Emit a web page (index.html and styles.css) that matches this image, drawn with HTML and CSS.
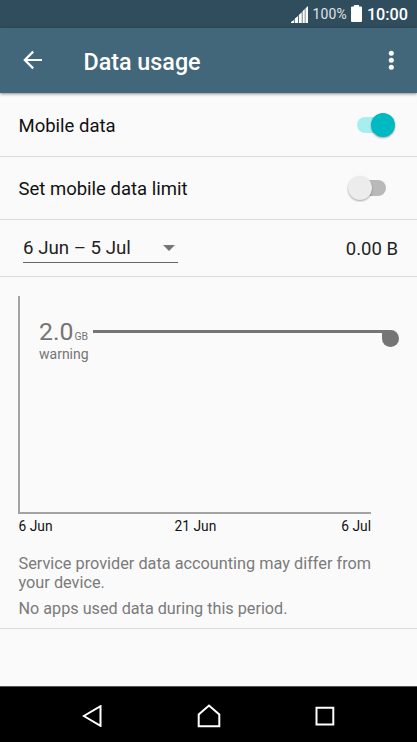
FILE: index.html
```html
<!DOCTYPE html>
<html lang="en">
<head>
<meta charset="utf-8">
<title>Data usage</title>
<link rel="stylesheet" href="styles.css">
</head>
<body>
<div class="status">
  <svg class="signal" width="17" height="17" viewBox="0 0 17 17"><path d="M0 17v-1l3-2v3zM3.700 17v-4.200L7 10v7zM7.800 17V9l3-2.700V17zM11.500 17V5.300l2.300-2.200V17zM14.400 17V2.500L17 0v17z" fill="#fff"/></svg>
  <span class="percent">100%</span>
  <svg class="battery" width="11" height="17" viewBox="0 0 11 17"><path d="M3 0h5v1.500h2q1 0 1 1V16q0 1-1 1H1q-1 0-1-1V2.500q0-1 1-1h2z" fill="#fff"/></svg>
  <span class="clock">10:00</span>
</div>
<header class="appbar">
  <svg class="back" width="20" height="20" viewBox="0 0 20 20"><path d="M19 10H2M10.200 1.600L1.800 10l8.400 8.400" fill="none" stroke="#fff" stroke-width="2.200"/></svg>
  <h1 class="title">Data usage</h1>
  <svg class="more" width="6" height="20" viewBox="0 0 6 20" fill="#fff"><circle cx="3.300" cy="3.200" r="2.500"/><circle cx="3.300" cy="10.200" r="2.500"/><circle cx="3.300" cy="17.200" r="2.500"/></svg>
</header>
<main class="content">
  <div class="row">
    <span>Mobile data</span>
    <span class="switch on"><span class="thumb"></span></span>
  </div>
  <div class="row">
    <span>Set mobile data limit</span>
    <span class="switch"><span class="thumb"></span></span>
  </div>
  <div class="row cycle">
    <div class="spinner"><span>6 Jun – 5 Jul</span><svg width="12" height="6" viewBox="0 0 12 6"><path d="M0 0h12L6 6z" fill="#757575"/></svg></div>
    <span class="total">0.00 B</span>
  </div>
  <section class="usage">
    <div class="chart">
      <div class="warning">
        <div class="label"><div class="amount">2.0<span class="unit">GB</span></div><div class="caption">warning</div></div>
        <span class="line"></span>
        <span class="handle"></span>
      </div>
    </div>
    <div class="axis"><span>6 Jun</span><span class="mid">21 Jun</span><span>6 Jul</span></div>
    <p class="note">Service provider data accounting may differ from your device.</p>
    <p class="note">No apps used data during this period.</p>
  </section>
</main>
<nav class="nav">
  <svg width="20" height="22" viewBox="0 0 20 22"><path d="M18.500 1.200v19.600L1.800 11z"/></svg>
  <svg width="24" height="24" viewBox="0 0 24 24"><path d="M1.700 22.300V10.500L12 1.500l10.300 9v11.800z"/></svg>
  <svg width="20" height="20" viewBox="0 0 20 20"><path d="M1.500 1.800h16.800v16.700H1.500z"/></svg>
</nav>
</body>
</html>
```
FILE: styles.css
```css
* { box-sizing: border-box; }
body {
  margin: 0;
  height: 742px;
  display: flex;
  flex-direction: column;
  overflow: hidden;
  background: #fafafa;
  color: #111;
  font-family: Roboto, "Liberation Sans", sans-serif;
  font-size: 18.500px;
}
svg { display: block; flex: none; }
.status {
  height: 28px;
  flex: none;
  display: flex;
  align-items: center;
  justify-content: flex-end;
  padding-right: 9px;
  background: #2f4d5d;
  color: #fff;
  white-space: nowrap;
}
.signal { margin: 1px 5px 0 0; }
.percent { font-size: 13.900px; letter-spacing: 0.200px; color: #e0e5e8; margin-right: 4px; }
.battery { margin: -1px 5px 0 0; }
.clock { font-size: 16.200px; font-weight: 500; }
.appbar {
  position: relative;
  height: 65px;
  flex: none;
  display: flex;
  align-items: center;
  padding: 0 23px 1px;
  background: #42677a;
  color: #fff;
  box-shadow: 0 1px 3px rgba(0, 0, 0, 0.450);
}
.title { margin: 3px 0 0 40.500px; font-size: 23.300px; font-weight: 500; flex: 1; }
.content { flex: 1; }
.row {
  height: 63px;
  display: flex;
  align-items: center;
  justify-content: space-between;
  padding: 2px 19px 0 18.500px;
  border-bottom: 1px solid #dadada;
}
.row:first-child { height: 64px; }
.switch {
  position: relative;
  width: 29px;
  height: 16px;
  margin: -2px 12px 0 0;
  border-radius: 8px;
  background: #b9b9b9;
}
.thumb {
  position: absolute;
  left: -9px;
  top: -4px;
  width: 24px;
  height: 24px;
  border-radius: 50%;
  background: #ececec;
  box-shadow: 0 1px 2px rgba(0, 0, 0, 0.350);
}
.on { background: #a7eeee; }
.on .thumb { left: 14px; background: #00bac3; }
.row.cycle { height: 57px; padding: 0 19px 0 23px; color: #222; }
.spinner {
  width: 155px;
  height: 29px;
  margin-top: 1px;
  display: flex;
  align-items: center;
  justify-content: space-between;
  padding-right: 3px;
  border-bottom: 1px solid #666;
  font-size: 18.700px;
}
.total { margin-top: 2px; }
.usage {
  height: 352px;
  padding: 19px 18px 0;
  border-bottom: 1px solid #dadada;
}
.chart {
  width: 353px;
  height: 218px;
  border-left: 2px solid #a3a3a3;
  border-bottom: 2px solid #a3a3a3;
}
.warning {
  width: 378.700px;
  display: flex;
  align-items: flex-start;
  padding: 21px 0 0 19px;
  color: #757575;
}
.label { width: 53.500px; flex: none; }
.amount { height: 29px; font-size: 24.800px; line-height: 29px; white-space: nowrap; }
.unit { font-size: 10.500px; margin-left: 1px; }
.caption { font-size: 14px; line-height: 16px; }
.line { flex: 1; height: 3px; margin-top: 13px; background: #757575; }
.handle {
  width: 16.500px;
  height: 17px;
  margin-top: 13px;
  border-radius: 0 50% 50% 50%;
  background: #757575;
}
.axis {
  width: 353px;
  display: flex;
  justify-content: space-between;
  margin-top: 4px;
  padding-left: 0.500px;
  font-size: 13.800px;
  line-height: 16px;
}
.mid { margin-right: 3px; }
.note {
  margin: 20px 0 0 0.500px;
  width: 365px;
  font-size: 16.300px;
  line-height: 19px;
  color: #7b7b7b;
}
.note + .note { margin-top: 7px; font-size: 16.200px; }
.nav {
  height: 56px;
  flex: none;
  display: flex;
  align-items: center;
  justify-content: space-between;
  padding: 3px 82px 0;
  border-top: 1px solid #555;
  background: #000;
}
.nav path { fill: none; stroke: #fff; stroke-width: 2; }
```
